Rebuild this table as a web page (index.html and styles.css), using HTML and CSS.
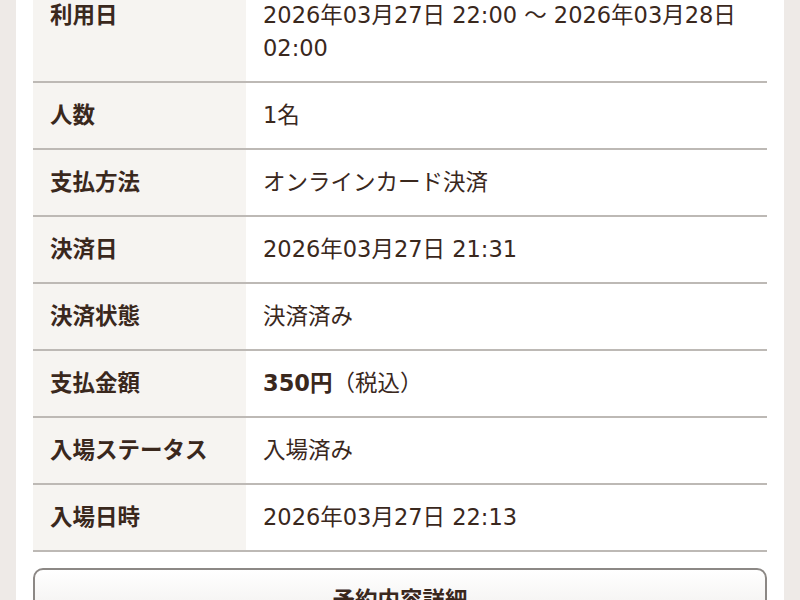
FILE: index.html
```html
<!DOCTYPE html>
<html lang="ja">
<head>
<meta charset="utf-8">
<link rel="stylesheet" href="styles.css">
</head>
<body>
<div class="page">
  <div class="card">
    <table class="info">
      <tr><th>利用日</th><td>2026年03月27日 22:00 〜 2026年03月28日 02:00</td></tr>
      <tr><th>人数</th><td>1名</td></tr>
      <tr><th>支払方法</th><td>オンラインカード決済</td></tr>
      <tr><th>決済日</th><td>2026年03月27日 21:31</td></tr>
      <tr><th>決済状態</th><td>決済済み</td></tr>
      <tr><th>支払金額</th><td><strong class="price">350円</strong>（税込）</td></tr>
      <tr><th>入場ステータス</th><td>入場済み</td></tr>
      <tr><th>入場日時</th><td>2026年03月27日 22:13</td></tr>
    </table>
    <button class="detail-btn">予約内容詳細</button>
  </div>
</div>
</body>
</html>
```
FILE: styles.css
```css
html, body {
  margin: 0;
  padding: 0;
  background: #eeeae7;
  height: 100%;
  overflow: hidden;
}
body {
  font-family: "DejaVu Sans", "Noto Sans CJK JP", sans-serif;
  color: #3a281d;
}
.page {
  padding: 0 16px;
}
.card {
  background: #fff;
  padding: 0 17px 40px;
  margin-top: -17px;
}
.info {
  width: 100%;
  border-collapse: collapse;
  font-size: 22.5px;
  line-height: 33px;
}
.info th, .info td {
  padding: 16px 17px;
  border-bottom: 2px solid #bdb9b5;
  text-align: left;
  vertical-align: top;
}
.info th {
  width: 179px;
  background: #f6f4f1;
  font-weight: 700;
}
.info td {
  font-weight: 400;
}
.price {
  font-weight: 700;
}
.detail-btn {
  display: block;
  width: 100%;
  margin-top: 16px;
  height: 60px;
  border: 2px solid #8c8885;
  border-radius: 10px;
  background: linear-gradient(#ffffff, #efedeb);
  font-family: inherit;
  font-size: 22.5px;
  font-weight: 700;
  color: #3a281d;
  padding: 0;
}
```
